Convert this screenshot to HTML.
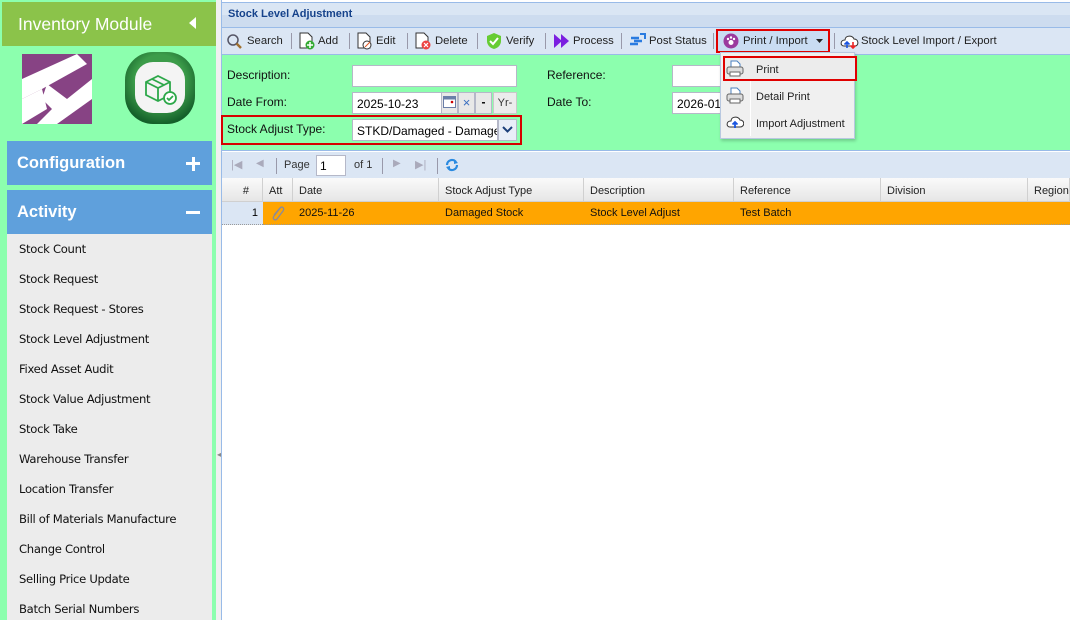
<!DOCTYPE html>
<html><head><meta charset="utf-8"><style>
*{box-sizing:border-box;margin:0;padding:0}
body{width:1070px;height:620px;overflow:hidden;background:#fff;font-family:"Liberation Sans",Tahoma,sans-serif;font-size:12px;color:#000;position:relative}
.a{position:absolute}
.side{left:0;top:0;width:216px;height:620px;background:#8cffae}
.hdr{left:2px;top:2px;width:214px;height:44px;background:#8bc34a;color:#fff;font-size:17.5px;padding:12px 0 0 16px;font-family:"Liberation Sans",sans-serif}
.sec{left:7px;width:205px;height:44px;background:#5fa0dc;color:#fff;font-weight:bold;font-size:16.5px;padding:13px 0 0 10px;font-family:"Liberation Sans",sans-serif}
.list{left:7px;top:234px;width:205px;height:386px;background:#ececec}
.list div{height:30px;padding:8px 0 0 12px;font-family:"DejaVu Sans",sans-serif;font-size:11.6px;color:#111;letter-spacing:-0.3px}
.tb span{position:absolute;top:35px;font-size:11.3px;color:#222}
.lbl{font-size:12px;color:#111}
.inp{background:#fff;border:1px solid #b5b8c8;height:22px;font-size:12px;padding:3px 4px}
.gh{top:178px;height:24px;background:linear-gradient(#fafafa,#e6e6e6);border-bottom:1px solid #d0d0d0;border-right:1px solid #d0d0d0;padding:7px 6px 0;font-size:11px;color:#222}
.gr{top:202px;height:23px;font-size:11px;padding:5px 6px;color:#111}
</style></head><body>
<div class="a" style="left:0;top:0;width:2px;height:46px;background:#2c5fa8"></div>
<div class="a side"></div>
<div class="a hdr">Inventory Module</div>
<svg class="a" style="left:188px;top:17px" width="10" height="12"><polygon points="8,0 8,12 1,6" fill="#fff"/></svg>
<svg class="a" style="left:22px;top:54px" width="70" height="70" viewBox="0 0 70 70"><rect width="70" height="70" fill="#874384"/><polygon points="0,25 55,0 65,10 20,35 0,45" fill="#fff"/><polygon points="25,30 45,45 70,25 70,45 35,70 15,70 30,55 20,45" fill="#fff"/><polygon points="0,45 20,35 25,55 0,70" fill="#fff"/></svg>
<svg class="a" style="left:124px;top:51px" width="72" height="74" viewBox="0 0 72 74"><defs><radialGradient id="g" cx="50%" cy="40%" r="60%"><stop offset="0.6" stop-color="#3c9c4a"/><stop offset="1" stop-color="#14602a"/></radialGradient></defs><rect x="1" y="1" width="70" height="72" rx="28" fill="url(#g)"/><rect x="11" y="11" width="50" height="51" rx="18" fill="#f4f4f4"/><g fill="none" stroke="#2da84a" stroke-width="1.8"><path d="M22 31 L34 25 L46 31 L46 44 L34 50 L22 44 Z M22 31 L34 37 L46 31 M34 37 V50 M28 28 L40 34"/><circle cx="46" cy="47" r="6" fill="#fff"/><path d="M43 47 l2 2 l4 -4"/></g></svg>
<div class="a sec" style="top:141px">Configuration</div>
<div class="a" style="left:186px;top:162px;width:14px;height:3px;background:#fff"></div>
<div class="a" style="left:191.5px;top:156.5px;width:3px;height:14px;background:#fff"></div>
<div class="a sec" style="top:190px">Activity</div>
<div class="a" style="left:186px;top:211px;width:14px;height:3px;background:#fff"></div>
<div class="a list">
<div>Stock Count</div><div>Stock Request</div><div>Stock Request - Stores</div><div>Stock Level Adjustment</div><div>Fixed Asset Audit</div><div>Stock Value Adjustment</div><div>Stock Take</div><div>Warehouse Transfer</div><div>Location Transfer</div><div>Bill of Materials Manufacture</div><div>Change Control</div><div>Selling Price Update</div><div>Batch Serial Numbers</div>
</div>
<div class="a" style="left:216px;top:0;width:5px;height:620px;background:#f0f0f0"></div>
<div class="a" style="left:217px;top:450px;width:3px;height:8px;color:#888;font-size:8px">◂</div>
<div class="a" style="left:221px;top:0;width:1px;height:620px;background:#99bbe8"></div>

<div class="a" style="left:222px;top:2px;width:848px;height:26px;background:linear-gradient(#dae6f4 0,#dae6f4 50%,#cddcef 50%);border-top:1px solid #99bbe8;border-bottom:1px solid #99bbe8"></div>
<div class="a" style="left:228px;top:8px;font-weight:bold;font-size:11px;color:#15428b">Stock Level Adjustment</div>
<div class="a" style="left:222px;top:28px;width:848px;height:27px;background:#dbe6f4;border-bottom:1px solid #99bbe8"></div>
<div class="tb">
<svg class="a" style="left:226px;top:33px" width="18" height="16"><circle cx="7" cy="7" r="5" fill="none" stroke="#556" stroke-width="1.5"/><path d="M10.5 10.5 L15 15" stroke="#a07030" stroke-width="2.5"/></svg><span style="left:247px">Search</span>
<div class="a" style="left:291px;top:33px;width:1px;height:16px;background:#99a"></div>
<svg class="a" style="left:298px;top:32px" width="18" height="18"><path d="M2 1 H10 L14 5 V16 H2 Z" fill="#fff" stroke="#333"/><circle cx="12" cy="13" r="4.5" fill="#3a3"/><path d="M12 10v6M9 13h6" stroke="#fff" stroke-width="1.5"/></svg><span style="left:318px">Add</span>
<div class="a" style="left:349px;top:33px;width:1px;height:16px;background:#99a"></div>
<svg class="a" style="left:356px;top:32px" width="18" height="18"><path d="M2 1 H10 L14 5 V16 H2 Z" fill="#fff" stroke="#333"/><circle cx="11" cy="13" r="4" fill="#fff" stroke="#333"/><path d="M9 15 L14 10" stroke="#d52"/></svg><span style="left:376px">Edit</span>
<div class="a" style="left:407px;top:33px;width:1px;height:16px;background:#99a"></div>
<svg class="a" style="left:414px;top:32px" width="18" height="18"><path d="M2 1 H10 L14 5 V16 H2 Z" fill="#fff" stroke="#333"/><circle cx="12" cy="13" r="4.5" fill="#e44"/><path d="M10 11l4 4M14 11l-4 4" stroke="#fff" stroke-width="1.2"/></svg><span style="left:435px">Delete</span>
<div class="a" style="left:477px;top:33px;width:1px;height:16px;background:#99a"></div>
<svg class="a" style="left:485px;top:32px" width="18" height="18"><path d="M9 1 L16 4 V9 C16 13 13 16 9 17 C5 16 2 13 2 9 V4 Z" fill="#6c3"/><path d="M5 9l3 3 5-6" stroke="#fff" stroke-width="2" fill="none"/></svg><span style="left:506px">Verify</span>
<div class="a" style="left:545px;top:33px;width:1px;height:16px;background:#99a"></div>
<svg class="a" style="left:553px;top:33px" width="18" height="16"><polygon points="1,1 9,8 1,15" fill="#7b1fe0"/><polygon points="8,1 16,8 8,15" fill="#7b1fe0"/></svg><span style="left:573px">Process</span>
<div class="a" style="left:621px;top:33px;width:1px;height:16px;background:#99a"></div>
<svg class="a" style="left:628px;top:32px" width="18" height="18"><path d="M3 6h8M6 9h8M2 12h8" stroke="#2a7be0" stroke-width="2.5"/><path d="M12 2h5v5" fill="none" stroke="#2a7be0" stroke-width="2"/></svg><span style="left:649px">Post Status</span>
<div class="a" style="left:713px;top:33px;width:1px;height:16px;background:#99a"></div>
<div class="a" style="left:716px;top:29px;width:114px;height:24px;border:2px solid #e00000;background:#c9dcf2"></div>
<svg class="a" style="left:723px;top:33px" width="16" height="16"><circle cx="8" cy="8" r="7.5" fill="#9b3a9e"/><circle cx="8" cy="9.5" r="2.5" fill="#fff"/><circle cx="5" cy="6" r="1.2" fill="#fff"/><circle cx="8" cy="4.5" r="1.2" fill="#fff"/><circle cx="11" cy="6" r="1.2" fill="#fff"/></svg><span style="left:743px">Print / Import</span>
<svg class="a" style="left:816px;top:39px" width="7" height="4"><polygon points="0,0 7,0 3.5,4" fill="#222"/></svg>
<div class="a" style="left:834px;top:33px;width:1px;height:16px;background:#99a"></div>
<svg class="a" style="left:840px;top:33px" width="20" height="16"><path d="M4 13 C0 13 0 7 5 7 C5 2 13 2 14 6 C19 6 19 13 15 13 Z" fill="#fff" stroke="#333"/><path d="M7 15V9M4.5 11.5L7 9l2.5 2.5" stroke="#1a55e0" stroke-width="1.6" fill="none"/><path d="M13 9v6M10.5 12.5L13 15l2.5-2.5" stroke="#e22" stroke-width="1.6" fill="none"/></svg><span style="left:861px">Stock Level Import / Export</span>
</div>

<div class="a" style="left:222px;top:55px;width:848px;height:96px;background:#8cffae;border-bottom:1px solid #99bbe8"></div>
<div class="a lbl" style="left:227px;top:68px">Description:</div>
<div class="a inp" style="left:352px;top:65px;width:165px"></div>
<div class="a lbl" style="left:547px;top:68px">Reference:</div>
<div class="a inp" style="left:672px;top:65px;width:60px"></div>
<div class="a lbl" style="left:227px;top:95px">Date From:</div>
<div class="a inp" style="left:352px;top:92px;width:90px;padding-top:4px">2025-10-23</div>
<div class="a" style="left:441px;top:92px;width:17px;height:22px;background:#e8e8e8;border:1px solid #b5b8c8"></div>
<svg class="a" style="left:443px;top:96px" width="13" height="12"><rect x="0.5" y="0.5" width="12" height="11" fill="#fff" stroke="#6a7ea8"/><rect x="0.5" y="0.5" width="12" height="3" fill="#6a7ea8"/><circle cx="9" cy="6" r="1.3" fill="#c00"/></svg>
<div class="a" style="left:458px;top:92px;width:17px;height:22px;background:#e8e8e8;border:1px solid #b5b8c8;color:#3a6fc0;font-size:13px;text-align:center;line-height:19px">×</div>
<div class="a" style="left:475px;top:92px;width:17px;height:22px;background:#e8e8e8;border:1px solid #b5b8c8;font-weight:bold;text-align:center;line-height:18px">-</div>
<div class="a" style="left:493px;top:92px;width:24px;height:22px;background:#ececec;border:1px solid #c8c8c8;font-size:11px;text-align:center;line-height:20px;color:#333">Yr-</div>
<div class="a lbl" style="left:547px;top:95px">Date To:</div>
<div class="a inp" style="left:672px;top:92px;width:60px;padding-top:4px">2026-01</div>
<div class="a" style="left:221px;top:115px;width:301px;height:30px;border:2px solid #d60000"></div>
<div class="a lbl" style="left:227px;top:122px">Stock Adjust Type:</div>
<div class="a inp" style="left:352px;top:119px;width:146px;padding-top:4px;overflow:hidden;white-space:nowrap">STKD/Damaged - Damage</div>
<div class="a" style="left:498px;top:119px;width:19px;height:22px;background:#e8eef8;border:1px solid #b5b8c8"></div>
<svg class="a" style="left:502px;top:126px" width="11" height="7"><path d="M1 1l4.5 4.5L10 1" stroke="#1b3f7a" stroke-width="2" fill="none"/></svg>

<div class="a" style="left:222px;top:152px;width:848px;height:26px;background:#dbe6f4"></div>
<div class="a" style="left:231px;top:158px;color:#aab;font-size:11px">|◀</div>
<div class="a" style="left:256px;top:158px;color:#aab;font-size:10px">◀</div>
<div class="a" style="left:276px;top:158px;width:1px;height:16px;background:#99a"></div>
<div class="a" style="left:284px;top:159px;font-size:11px;color:#333">Page</div>
<div class="a inp" style="left:316px;top:155px;width:30px;height:21px;padding:3px 3px">1</div>
<div class="a" style="left:354px;top:159px;font-size:11px;color:#333">of 1</div>
<div class="a" style="left:382px;top:158px;width:1px;height:16px;background:#99a"></div>
<div class="a" style="left:393px;top:158px;color:#aab;font-size:10px">▶</div>
<div class="a" style="left:415px;top:158px;color:#aab;font-size:11px">▶|</div>
<div class="a" style="left:437px;top:158px;width:1px;height:16px;background:#99a"></div>
<svg class="a" style="left:444px;top:157px" width="16" height="16"><path d="M3 8a5 5 0 0 1 9-3M13 8a5 5 0 0 1-9 3" fill="none" stroke="#2a8ae0" stroke-width="2.2"/><polygon points="10,2 14,6 10,7" fill="#2a8ae0"/><polygon points="6,9 2,10 6,14" fill="#2a8ae0"/></svg>

<div class="a gh" style="left:222px;width:41px;text-align:right;padding-right:13px">#</div>
<div class="a gh" style="left:263px;width:30px">Att</div>
<div class="a gh" style="left:293px;width:146px">Date</div>
<div class="a gh" style="left:439px;width:145px">Stock Adjust Type</div>
<div class="a gh" style="left:584px;width:150px">Description</div>
<div class="a gh" style="left:734px;width:147px">Reference</div>
<div class="a gh" style="left:881px;width:147px">Division</div>
<div class="a gh" style="left:1028px;width:42px">Region</div>
<div class="a" style="left:222px;top:202px;width:41px;height:23px;background:#dbe6f4;font-size:11px;text-align:right;padding:5px 5px 0 0;border-bottom:1px dotted #999">1</div>
<div class="a" style="left:263px;top:202px;width:807px;height:23px;background:#ffa500;border-bottom:1px dotted #999"></div>
<svg class="a" style="left:269px;top:204px" width="16" height="19"><path d="M12 3 L5 12 C3 15 6 17 8 15 L14 7 C16 4 13 2 11 4 L5 11" fill="none" stroke="#8a8a9a" stroke-width="1.3"/></svg>
<div class="a gr" style="left:293px">2025-11-26</div>
<div class="a gr" style="left:439px">Damaged Stock</div>
<div class="a gr" style="left:584px">Stock Level Adjust</div>
<div class="a gr" style="left:734px">Test Batch</div>

<div class="a" style="left:720px;top:52px;width:135px;height:87px;background:#f0f0f0;border:1px solid #b8c8e0;box-shadow:1px 2px 3px rgba(0,0,0,0.2)"></div>
<div class="a" style="left:750px;top:56px;width:1px;height:80px;background:#e0e0e0;border-right:1px solid #fff"></div>
<div class="a" style="left:723px;top:56px;width:134px;height:25px;border:2px solid #e00000;background:#ececec"></div>
<svg class="a" style="left:726px;top:60px" width="18" height="17"><path d="M5 1h6l3 3v4H5z" fill="#fff" stroke="#4a80c0"/><rect x="1" y="7" width="16" height="7" rx="2" fill="#ddd" stroke="#666"/><rect x="4" y="12" width="10" height="4" fill="#fff" stroke="#666"/></svg>
<div class="a" style="left:756px;top:64px;font-size:11px;color:#222">Print</div>
<svg class="a" style="left:726px;top:87px" width="18" height="17"><path d="M5 1h6l3 3v4H5z" fill="#fff" stroke="#4a80c0"/><rect x="1" y="7" width="16" height="7" rx="2" fill="#ddd" stroke="#666"/><rect x="4" y="12" width="10" height="4" fill="#fff" stroke="#666"/></svg>
<div class="a" style="left:756px;top:91px;font-size:11px;color:#222">Detail Print</div>
<svg class="a" style="left:726px;top:115px" width="18" height="14"><path d="M4 12C0 12 0 6 5 6C5 1 13 1 14 5C19 5 19 12 14 12Z" fill="#fff" stroke="#333"/><path d="M9 13V7M6.5 9.5L9 7l2.5 2.5" stroke="#1a55e0" stroke-width="1.8" fill="none"/></svg>
<div class="a" style="left:756px;top:118px;font-size:11px;color:#222">Import Adjustment</div>
</body></html>
